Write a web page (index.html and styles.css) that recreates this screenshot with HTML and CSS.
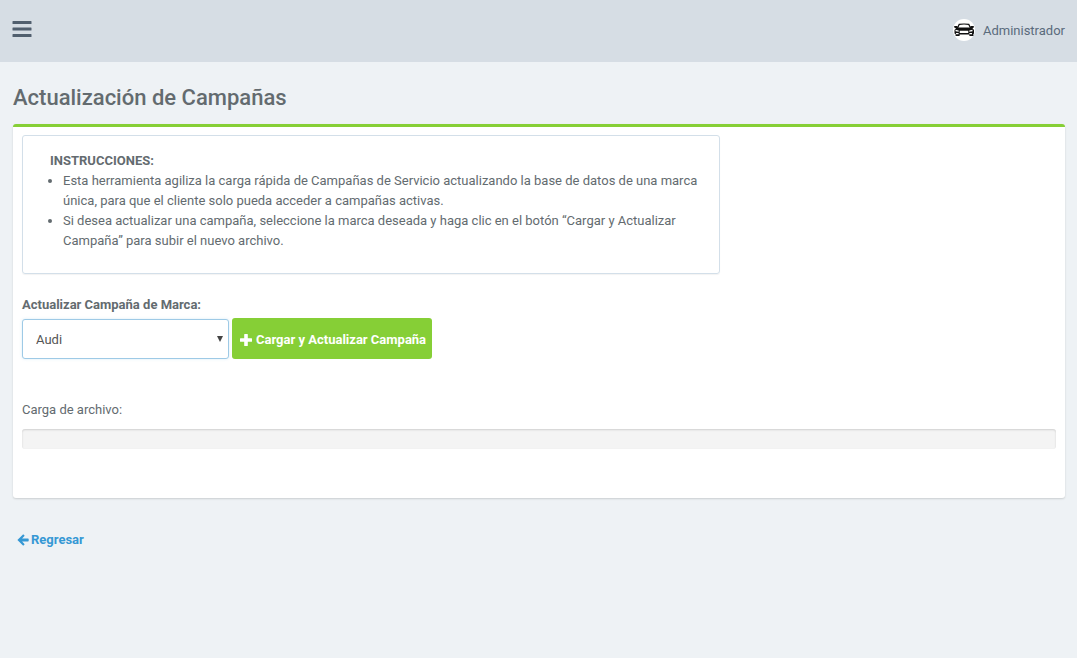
FILE: index.html
```html
<!DOCTYPE html>
<html lang="es">
<head>
<meta charset="utf-8">
<meta name="viewport" content="width=device-width, initial-scale=1">
<title>Actualización de Campañas</title>
<link rel="stylesheet" href="styles.css">
</head>
<body>
<header class="topbar">
  <button class="menu-toggle" type="button" aria-label="Menú">
    <svg class="menu-icon" viewBox="0 0 20 16" aria-hidden="true"><path d="M1 0h18q.5 0 .5.500v2q0 .5-.5.5H1q-.5 0-.5-.5v-2Q.5 0 1 0zM1 6.500h18q.5 0 .5.500v2q0 .5-.5.5H1q-.5 0-.5-.5v-2q0-.5.5-.5zM1 13h18q.5 0 .5.500v2q0 .5-.5.5H1q-.5 0-.5-.5v-2q0-.5.5-.5z"/></svg>
  </button>
  <a class="user" href="#">
    <svg class="avatar" viewBox="0 0 22 22" aria-hidden="true">
      <circle cx="11" cy="11" r="11" fill="#fff"/>
      <path d="M4.500 9 6.200 5.400Q11 4.600 15.800 5.400L17.500 9" fill="none" stroke="#111" stroke-width="1.200"/>
      <path d="M1.200 7h3l1 1.500h11.600l1-1.500h3v1.500l-1.300.7 1.500 1.800v3.500l-.6.500v2h-4V15.500H6.600V17h-4v-2L1.500 14.500V11L3 9.200 1.200 8.500z" fill="#111"/>
      <path d="M2.500 10.700l3.200.8v1.300l-3.200-.5zM19.500 10.700l-3.200.8v1.300l3.200-.5zM6.700 11.700h8.600v2.300H6.700zM3 14h2.600v1.200H3zM16.400 14H19v1.200h-2.600z" fill="#fff"/>
    </svg>
    <span>Administrador</span>
  </a>
</header>
<main class="content">
  <h1 class="title">Actualización de Campañas</h1>
  <section class="panel">
    <div class="instructions">
      <strong class="instructions-title">INSTRUCCIONES:</strong>
      <ul class="instructions-list">
        <li>Esta herramienta agiliza la carga rápida de Campañas de Servicio actualizando la base de datos de una marca única, para que el cliente solo pueda acceder a campañas activas.</li>
        <li>Si desea actualizar una campaña, seleccione la marca deseada y haga clic en el botón “Cargar y Actualizar Campaña” para subir el nuevo archivo.</li>
      </ul>
    </div>
    <form class="brand-form">
      <label class="brand-label" for="brand">Actualizar Campaña de Marca:</label>
      <div class="brand-row">
        <div class="select-wrap">
          <select class="brand-select" id="brand"><option>Audi</option></select>
          <svg class="caret" viewBox="0 0 6 6" aria-hidden="true"><path d="M0 0h6L3 6z"/></svg>
        </div>
        <button class="upload" type="button">
          <svg class="plus" viewBox="0 0 12 12" aria-hidden="true"><path d="M4.200.5Q4.200 0 4.700 0h2.600q.5 0 .5.500v3.700h3.700q.5 0 .5.500v2.600q0 .5-.5.500H7.800v3.700q0 .5-.5.500H4.700q-.5 0-.5-.5V7.800H.5Q0 7.800 0 7.300V4.700q0-.5.5-.5h3.700z"/></svg>
          <span>Cargar y Actualizar Campaña</span>
        </button>
      </div>
    </form>
    <div class="progress-label" id="progress-label">Carga de archivo:</div>
    <div class="progress" role="progressbar" aria-labelledby="progress-label" aria-valuenow="0" aria-valuemin="0" aria-valuemax="100"></div>
  </section>
  <a class="back" href="#">
    <svg class="arrow" viewBox="0 0 12 12" aria-hidden="true"><path d="M6.200.3 7.700 1.800 5.100 4.600H11q.7 0 .7.700v1.400q0 .7-.7.700H5.100l2.600 2.800-1.500 1.500L.4 6z"/></svg>
    <span>Regresar</span>
  </a>
</main>
</body>
</html>
```

FILE: styles.css
```css
* {
  box-sizing: border-box;
}

body {
  margin: 0;
  min-height: 100vh;
  background: #eef2f5;
  color: #636b6f;
  font: 13px/20px Roboto, "Liberation Sans", sans-serif;
}

a {
  text-decoration: none;
}

.topbar {
  display: flex;
  align-items: center;
  justify-content: space-between;
  height: 62px;
  padding: 0 12px;
  background: #d6dde4;
}

.menu-toggle {
  display: flex;
  padding: 0 0 4px;
  border: 0;
  background: none;
}

.menu-icon {
  width: 20px;
  height: 16px;
  fill: #515f6e;
}

.user {
  display: flex;
  align-items: center;
  gap: 8px;
  padding-bottom: 2px;
  color: #5a6b7c;
}

.user span {
  padding-top: 1px;
}

.avatar {
  width: 22px;
  height: 22px;
}

.content {
  padding: 21px 12px 20px 13px;
}

.title {
  margin: 0 0 11px;
  font-size: 22px;
  font-weight: 500;
  line-height: 30px;
}

.panel {
  padding: 8px 9px 49px;
  border-top: 3px solid #86cf36;
  border-radius: 3px;
  background: #fff;
  box-shadow: 0 1px 2px rgba(0, 0, 0, 0.15);
}

.instructions {
  width: 67.5%;
  margin-bottom: 21px;
  padding: 15px 14px 22px 27px;
  border: 1px solid #d3dfe9;
  border-radius: 3px;
  box-shadow: 0 1px 1px rgba(0, 0, 0, 0.05);
}

.instructions-title,
.brand-label {
  display: block;
  font-weight: 700;
}

.instructions-list {
  margin: 0;
  padding-left: 13px;
}

.brand-label {
  margin-bottom: 3px;
}

.brand-row {
  display: flex;
  align-items: center;
  gap: 3px;
}

.select-wrap {
  position: relative;
  width: 207px;
}

.brand-select {
  display: block;
  width: 100%;
  height: 40px;
  padding: 2px 24px 0 13px;
  border: 1px solid #9ecae6;
  border-radius: 3px;
  appearance: none;
  background: #fff;
  box-shadow: 0 0 3px rgba(126, 190, 230, 0.3);
  color: #555;
  font: inherit;
}

.caret {
  position: absolute;
  top: 17px;
  right: 6px;
  width: 6px;
  height: 6px;
  fill: #444;
  pointer-events: none;
}

.upload {
  display: flex;
  align-items: center;
  gap: 4px;
  height: 41px;
  padding: 2px 6px 0 8px;
  border: 0;
  border-radius: 3px;
  background: #86cf36;
  color: #fff;
  font: inherit;
  font-weight: 700;
}

.plus {
  width: 12px;
  height: 12px;
  fill: currentColor;
}

.progress-label {
  margin: 41px 0 9px;
}

.progress {
  height: 20px;
  border-radius: 3px;
  background: #f4f4f4;
  box-shadow: inset 0 1px 2px rgba(0, 0, 0, 0.15);
}

.back {
  display: inline-flex;
  align-items: center;
  gap: 2px;
  margin: 32px 4px 0;
  color: #3598d4;
  font-weight: 700;
}

.arrow {
  width: 12px;
  height: 12px;
  fill: currentColor;
}
```
